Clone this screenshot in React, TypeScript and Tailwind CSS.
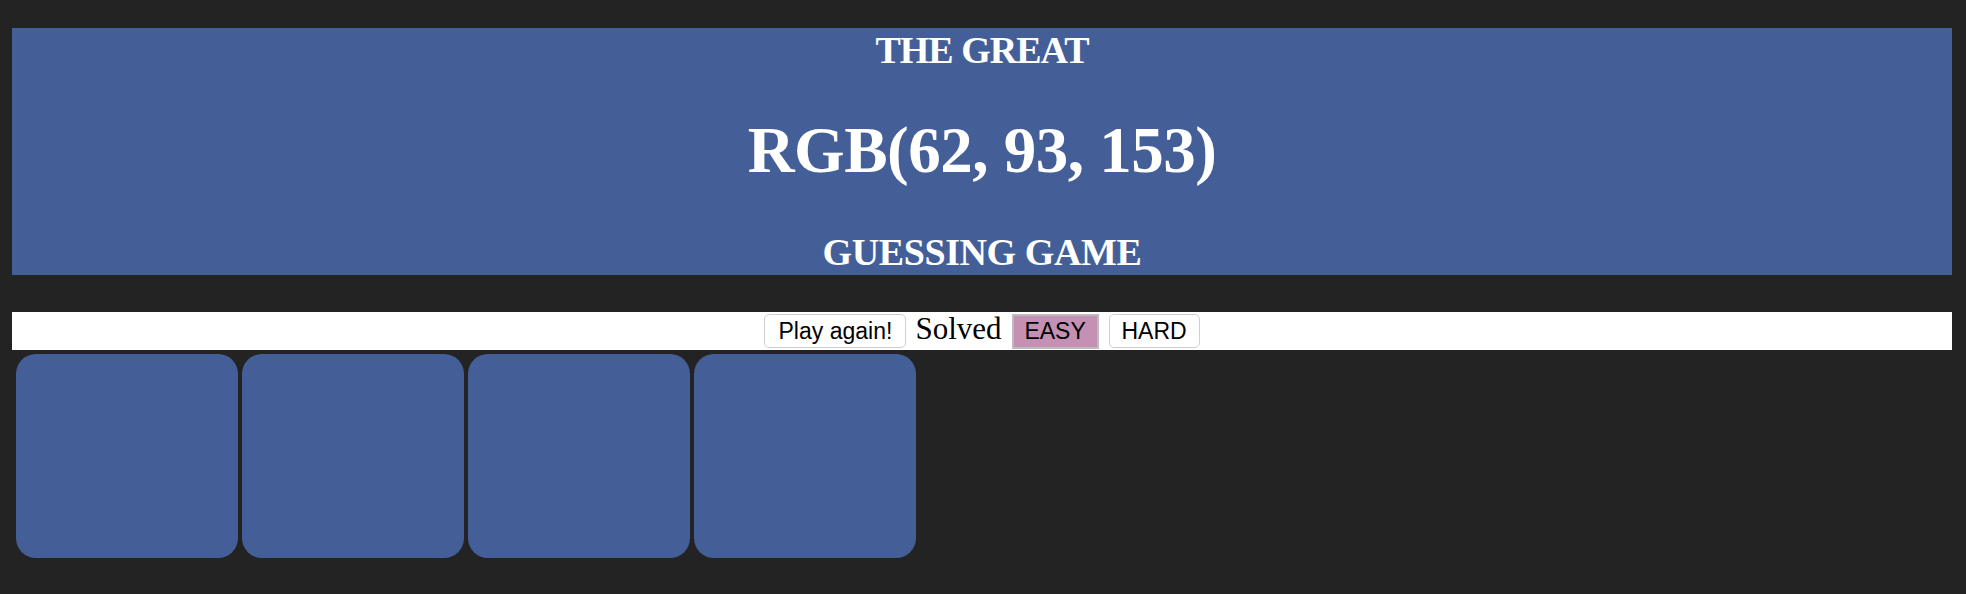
import React from 'react'

const squares = [0, 1, 2, 3]

export default function App() {
  return (
    <div className="min-h-[594px] bg-[#232323] pt-[28px] pl-[12px] pr-[14px]">
      <h1 className="bg-[#445f97] pb-[1px] text-center font-bold text-white font-['Liberation_Serif','Times_New_Roman',serif]">
        <span className="block h-[44px] text-[38px] leading-[44px] tracking-[-1px]">THE GREAT</span>
        <span className="mt-[42px] block h-[72px] text-[65px] leading-[72px] tracking-[-0.5px]">
          RGB(62, 93, 153)
        </span>
        <span className="mt-[44px] block h-[44px] text-[38px] leading-[44px] tracking-[-0.4px]">
          GUESSING GAME
        </span>
      </h1>

      <div className="mt-[37px] flex h-[38px] items-center justify-center bg-white font-['Liberation_Sans',Arial,sans-serif] text-[23px] text-black">
        <button className="h-[34px] w-[142px] rounded-[5px] border border-[#cfcfcf] bg-white leading-none">
          Play again!
        </button>
        <span className="mb-[5px] ml-[9px] font-['Liberation_Serif','Times_New_Roman',serif] text-[31px] leading-[33px]">
          Solved
        </span>
        <button className="ml-[10px] h-[35px] w-[87px] border-2 border-[#bdbdbd] bg-[#c490b4] leading-none">
          EASY
        </button>
        <button className="ml-[10px] h-[34px] w-[91px] rounded-[5px] border border-[#cfcfcf] bg-white leading-none">
          HARD
        </button>
      </div>

      <div className="flex gap-[4px] pl-[4px] pt-[4px]">
        {squares.map((i) => (
          <div key={i} className="h-[204px] w-[222px] rounded-[20px] bg-[#445f97]" />
        ))}
      </div>
    </div>
  )
}
